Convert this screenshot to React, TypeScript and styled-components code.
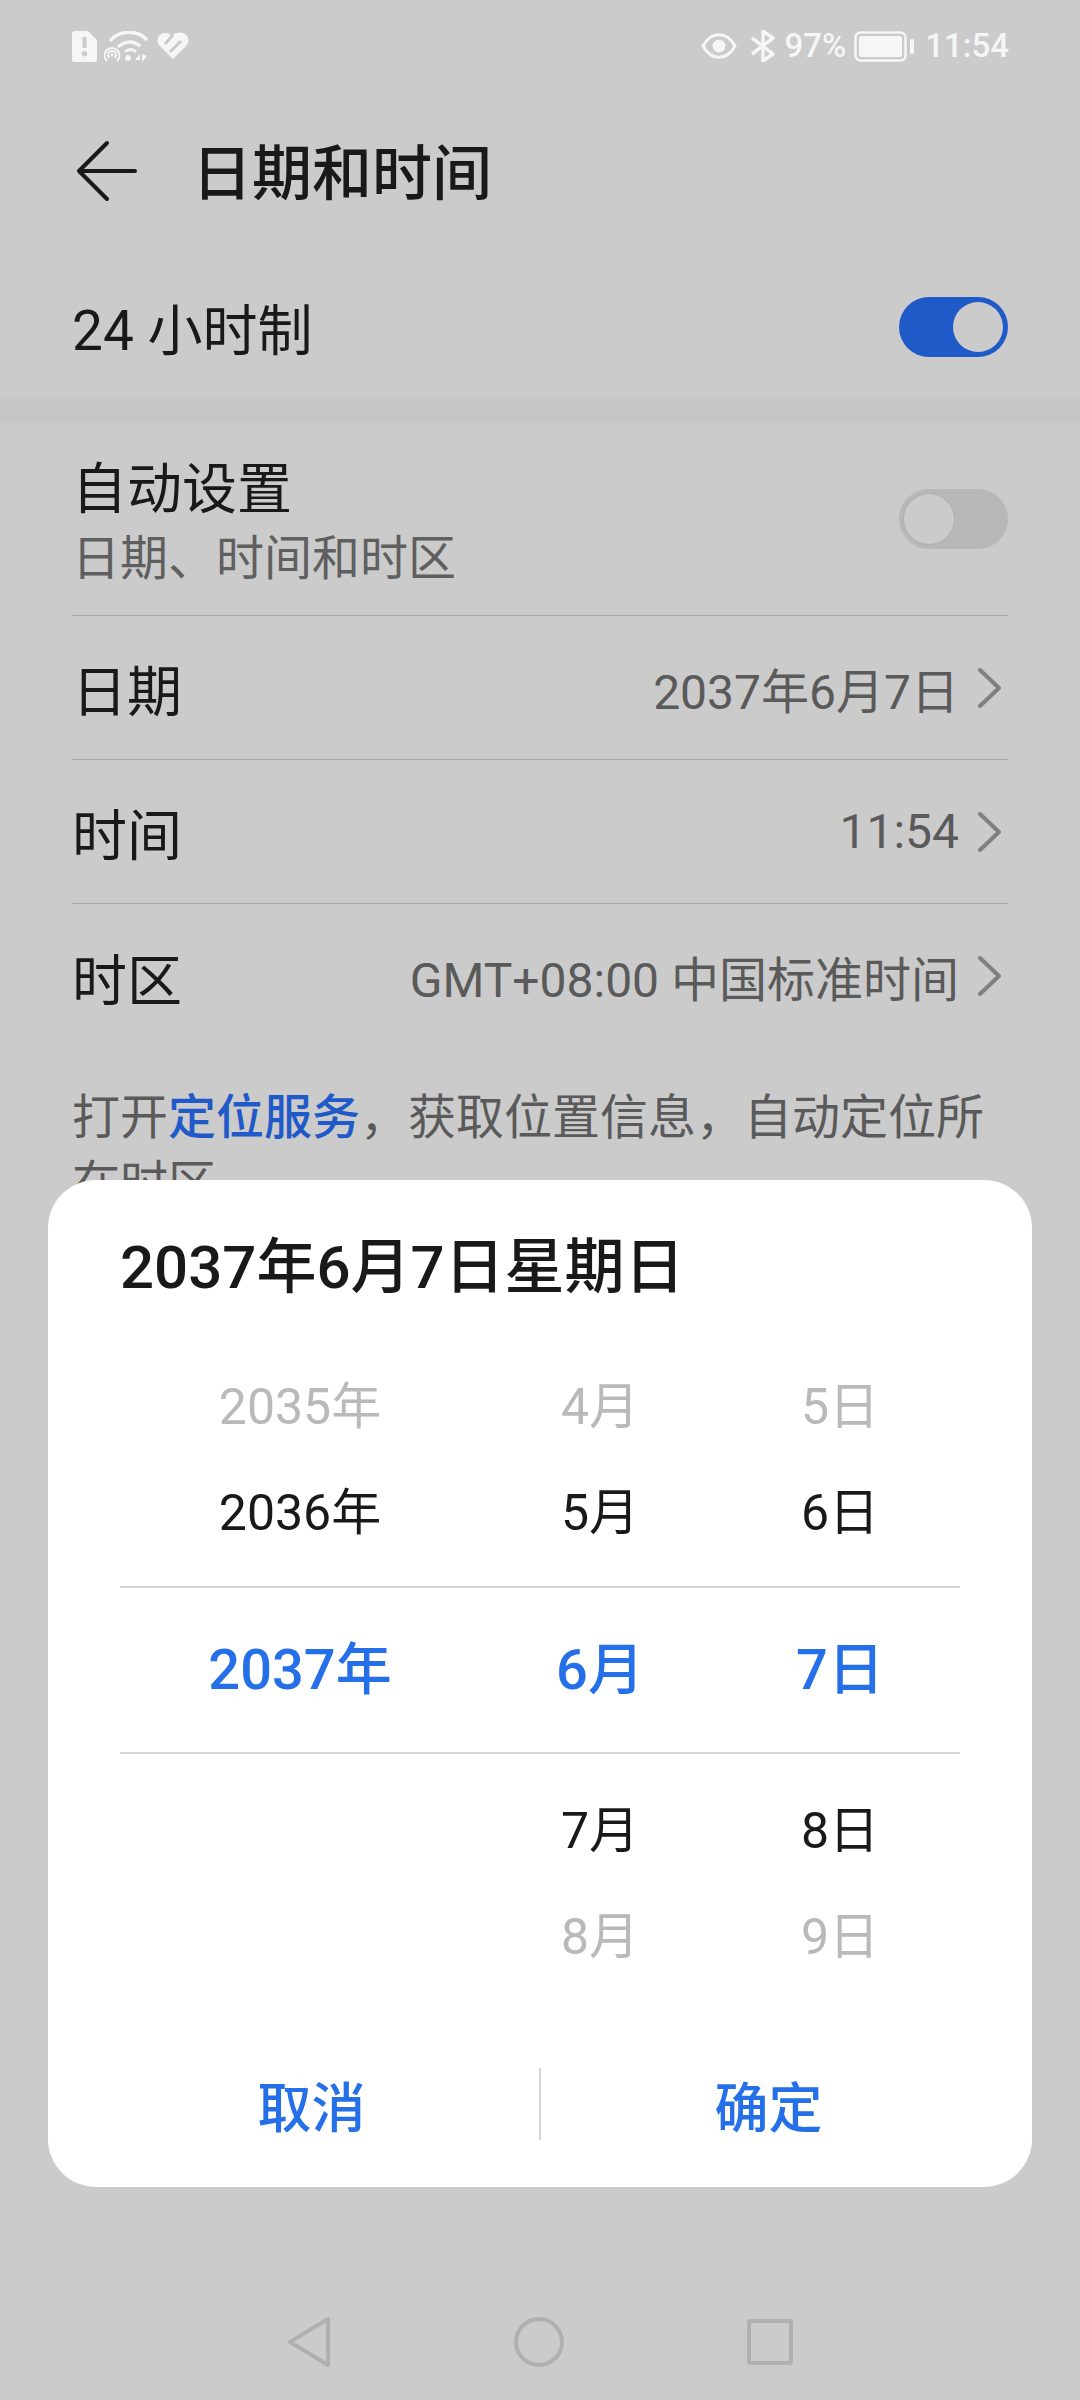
import * as React from 'react';
import styled, { createGlobalStyle } from 'styled-components';

const GlobalStyle = createGlobalStyle`
  html, body {
    margin: 0;
    padding: 0;
    background: #cbcbcb;
  }
  * {
    box-sizing: border-box;
  }
`;

const Page = styled.div`
  position: relative;
  display: flex;
  flex-direction: column;
  width: 1080px;
  height: 2400px;
  overflow: hidden;
  background: #cbcbcb;
  color: #191919;
  font-family: Roboto, "Noto Sans CJK SC", sans-serif;
`;

const StatusBar = styled.div`
  display: flex;
  justify-content: space-between;
  align-items: center;
  height: 92px;
  padding: 0 71px 0 72px;
  color: #f6f6f6;
`;

const StatusLeft = styled.div`
  display: flex;
  align-items: center;
  gap: 7px;
`;

const StatusRight = styled.div`
  display: flex;
  align-items: center;
`;

const StatusIcon = styled.span`
  display: flex;
  margin-right: 13px;
`;

const StatusText = styled.span<{ $margin?: string }>`
  font-size: 33px;
  font-weight: 500;
  line-height: 40px;
  margin: ${props => props.$margin || '0'};
`;

const Header = styled.div`
  display: flex;
  align-items: center;
  height: 156px;
  padding: 2px 0 0 76px;
`;

const Title = styled.h1`
  margin: 0 0 0 54px;
  padding-top: 8px;
  font-size: 60px;
  font-weight: 500;
  line-height: 80px;
`;

const Label = styled.div`
  font-size: 55px;
  line-height: 66px;
`;

const TopRow = styled.div`
  display: flex;
  justify-content: space-between;
  align-items: center;
  height: 151px;
  padding: 6px 72px 0 72px;

  ${Label} {
    padding-top: 8px;
  }
`;

const Band = styled.div`
  height: 24px;
  background: #c6c6c6;
`;

const List = styled.div`
  padding: 0 72px;
`;

const SwitchRow = styled.div`
  display: flex;
  justify-content: space-between;
  align-items: center;
  height: 193px;
  border-bottom: 1px solid #a8a8a8;
`;

const SwitchText = styled.div`
  padding-top: 8px;
`;

const Sub = styled.div`
  margin-top: 6px;
  font-size: 48px;
  line-height: 62px;
  color: #5f5f5f;
`;

const Row = styled.div`
  display: flex;
  justify-content: space-between;
  align-items: center;
  height: 144px;
  border-bottom: 1px solid #a8a8a8;

  &:last-child {
    border-bottom: none;
  }

  ${Label} {
    padding-top: 9px;
  }
`;

const Value = styled.div`
  display: flex;
  align-items: center;
  gap: 18px;
  padding-right: 6px;
  font-size: 48px;
  color: #5a5a5a;
`;

const Toggle = styled.div<{ $on?: boolean }>`
  display: flex;
  justify-content: ${props => (props.$on ? 'flex-end' : 'flex-start')};
  align-items: center;
  width: 109px;
  height: 60px;
  padding: 5px;
  border-radius: 30px;
  background: ${props => (props.$on ? '#1f5ac8' : '#b8b8b8')};
`;

const Knob = styled.div<{ $on?: boolean }>`
  width: 50px;
  height: 50px;
  border-radius: 50%;
  background: #cbcbcb;
  box-shadow: ${props => (props.$on ? 'none' : '0 0 1px 1px #b0b0b0')};
`;

const Description = styled.p`
  margin: 37px 72px 0 72px;
  font-size: 48px;
  line-height: 66px;
  color: #5a5a5a;
`;

const Link = styled.span`
  color: #1f5ac8;
  font-weight: 500;
`;

const NavBar = styled.div`
  position: absolute;
  left: 0;
  right: 0;
  bottom: 0;
  display: flex;
  justify-content: center;
  align-items: center;
  gap: 183px;
  height: 116px;
`;

const Dialog = styled.div`
  position: absolute;
  left: 48px;
  top: 1180px;
  width: 984px;
  height: 1007px;
  padding: 0 72px;
  border-radius: 48px;
  background: #fff;
`;

const DialogTitle = styled.h2`
  margin: 0;
  padding-top: 46px;
  font-size: 60px;
  font-weight: 500;
  line-height: 84px;
`;

const Picker = styled.div`
  margin-top: 42px;
`;

const PickerRow = styled.div<{ $selected?: boolean }>`
  display: grid;
  grid-template-columns: 360px 240px 240px;
  align-items: center;
  height: ${props => (props.$selected ? '168px' : '106px')};
  margin: ${props => (props.$selected ? '22px 0' : '0')};
  border-top: ${props => (props.$selected ? '2px solid #d6d6d6' : 'none')};
  border-bottom: ${props => (props.$selected ? '2px solid #d6d6d6' : 'none')};
`;

const PickerCell = styled.div<{ $tone: 'faded' | 'normal' | 'selected' }>`
  padding-bottom: ${props => (props.$tone === 'selected' ? '12px' : '6px')};
  text-align: center;
  font-size: ${props => (props.$tone === 'selected' ? '56px' : '50px')};
  font-weight: ${props => (props.$tone === 'selected' ? 500 : 400)};
  color: ${props =>
    props.$tone === 'selected' ? '#256fe8' : props.$tone === 'faded' ? '#b9b9b9' : '#191919'};
`;

const Actions = styled.div`
  display: flex;
  align-items: flex-start;
  height: 72px;
  margin: 80px -36px 0;
`;

const ActionButton = styled.div`
  flex: 1;
  padding-top: 6px;
  text-align: center;
  font-size: 54px;
  font-weight: 500;
  line-height: 72px;
  color: #256fe8;
`;

const ActionDivider = styled.div`
  width: 2px;
  height: 72px;
  background: #d6d6d6;
`;

const Chevron = () => (
  <svg width="25" height="42" viewBox="0 0 25 42" fill="none" stroke="#808080" strokeWidth="4" strokeLinecap="round" strokeLinejoin="round">
    <path d="M3 3l19 18L3 39" />
  </svg>
);

const BackArrow = () => (
  <svg width="62" height="62" viewBox="0 0 62 62" fill="none" stroke="#191919" strokeWidth="4" strokeLinecap="round" strokeLinejoin="round">
    <path d="M31 3L3 31l28 28M3 31h56" />
  </svg>
);

const SimAlert = () => (
  <svg width="25" height="31" viewBox="0 0 25 31">
    <path fill="#f6f6f6" fillRule="evenodd" d="M3 0h13l9 9v20a2 2 0 0 1-2 2H2a2 2 0 0 1-2-2V3a3 3 0 0 1 3-3zm7.500 6v11h4V6zm2 14a2.700 2.700 0 1 0 0 5.400 2.700 2.700 0 0 0 0-5.400z" />
  </svg>
);

const WifiHotspot = () => (
  <svg width="46" height="31" viewBox="0 0 46 31" fill="none" stroke="#f6f6f6" strokeWidth="3.500" strokeLinecap="round">
    <path d="M7 9C16 -1 33 -1 42 8" />
    <path d="M15 15c6-5 14-5 20-1" />
    <path d="M22 20c3-2 6-2 9 0" strokeWidth="3" />
    <circle cx="24" cy="27" r="3" fill="#f6f6f6" stroke="none" />
    <path d="M3 30a7.500 7.500 0 1 1 10 0" strokeWidth="2" strokeLinecap="butt" />
    <path d="M5.500 27a4 4 0 1 1 5 0" strokeWidth="2" strokeLinecap="butt" />
    <circle cx="8" cy="24" r="1.500" fill="#f6f6f6" stroke="none" />
    <path fill="#f6f6f6" stroke="none" d="M36 23l-5 6h5zM38 23v8l5-6z" />
  </svg>
);

const HeartBand = () => (
  <svg width="32" height="28" viewBox="0 0 32 28">
    <path fill="#f6f6f6" d="M16 27L2 13C-2 7 3 0 9 1c3 0 5 2 6 3 3-4 11-5 15 0 3 4 1 8-1 10z" />
    <path fill="none" stroke="#cbcbcb" strokeWidth="3" d="M24 9L13 20M16 3L8 12" />
  </svg>
);

const Eye = () => (
  <svg width="36" height="28" viewBox="0 0 36 28" fill="none" stroke="#f6f6f6" strokeWidth="3">
    <path d="M2 14C10 -1 26 -1 34 14C26 29 10 29 2 14z" />
    <circle cx="18" cy="14" r="6.500" fill="#f6f6f6" stroke="none" />
  </svg>
);

const Bluetooth = () => (
  <svg width="25" height="32" viewBox="0 0 25 32" fill="none" stroke="#f6f6f6" strokeWidth="3.500" strokeLinejoin="round">
    <path d="M2 8l21 16-10 7V1l10 7L2 24" />
  </svg>
);

const Battery = () => (
  <svg width="60" height="31" viewBox="0 0 60 31">
    <rect x="1.500" y="1.500" width="50" height="28" rx="5" fill="none" stroke="#f6f6f6" strokeWidth="2.500" />
    <rect x="5" y="5" width="43" height="21" rx="2" fill="#f6f6f6" />
    <rect x="56" y="8" width="4" height="15" rx="1.500" fill="#f6f6f6" />
  </svg>
);

const NavBack = () => (
  <svg width="44" height="50" viewBox="0 0 44 50" fill="none" stroke="#b0b0b0" strokeWidth="4" strokeLinejoin="round">
    <path d="M41 2v46L3 25z" />
  </svg>
);

const NavHome = () => (
  <svg width="50" height="50" viewBox="0 0 50 50" fill="none" stroke="#b0b0b0" strokeWidth="4">
    <circle cx="25" cy="25" r="23" />
  </svg>
);

const NavRecent = () => (
  <svg width="46" height="46" viewBox="0 0 46 46" fill="none" stroke="#b0b0b0" strokeWidth="4" strokeLinejoin="round">
    <rect x="2" y="2" width="42" height="42" rx="1" />
  </svg>
);

const pickerRows: { tone: 'faded' | 'normal' | 'selected'; cells: string[] }[] = [
  { tone: 'faded', cells: ['2035年', '4月', '5日'] },
  { tone: 'normal', cells: ['2036年', '5月', '6日'] },
  { tone: 'selected', cells: ['2037年', '6月', '7日'] },
  { tone: 'normal', cells: ['', '7月', '8日'] },
  { tone: 'faded', cells: ['', '8月', '9日'] },
];

const rows = [
  { label: '日期', value: '2037年6月7日' },
  { label: '时间', value: '11:54' },
  { label: '时区', value: 'GMT+08:00 中国标准时间' },
];

export default function App() {
  return (
    <Page>
      <GlobalStyle />
      <StatusBar>
        <StatusLeft>
          <SimAlert />
          <WifiHotspot />
          <HeartBand />
        </StatusLeft>
        <StatusRight>
          <StatusIcon>
            <Eye />
          </StatusIcon>
          <Bluetooth />
          <StatusText $margin="0 8px 0 9px">97%</StatusText>
          <Battery />
          <StatusText $margin="0 0 0 11px">11:54</StatusText>
        </StatusRight>
      </StatusBar>
      <Header>
        <BackArrow />
        <Title>日期和时间</Title>
      </Header>
      <TopRow>
        <Label>24 小时制</Label>
        <Toggle $on>
          <Knob $on />
        </Toggle>
      </TopRow>
      <Band />
      <List>
        <SwitchRow>
          <SwitchText>
            <Label>自动设置</Label>
            <Sub>日期、时间和时区</Sub>
          </SwitchText>
          <Toggle>
            <Knob />
          </Toggle>
        </SwitchRow>
        {rows.map(row => (
          <Row key={row.label}>
            <Label>{row.label}</Label>
            <Value>
              {row.value}
              <Chevron />
            </Value>
          </Row>
        ))}
      </List>
      <Description>
        打开<Link>定位服务</Link>，获取位置信息，自动定位所在时区
      </Description>
      <NavBar>
        <NavBack />
        <NavHome />
        <NavRecent />
      </NavBar>
      <Dialog>
        <DialogTitle>2037年6月7日星期日</DialogTitle>
        <Picker>
          {pickerRows.map(row => (
            <PickerRow key={row.cells[1]} $selected={row.tone === 'selected'}>
              {row.cells.map((cell, index) => (
                <PickerCell key={index} $tone={row.tone}>
                  {cell}
                </PickerCell>
              ))}
            </PickerRow>
          ))}
        </Picker>
        <Actions>
          <ActionButton>取消</ActionButton>
          <ActionDivider />
          <ActionButton>确定</ActionButton>
        </Actions>
      </Dialog>
    </Page>
  );
}
